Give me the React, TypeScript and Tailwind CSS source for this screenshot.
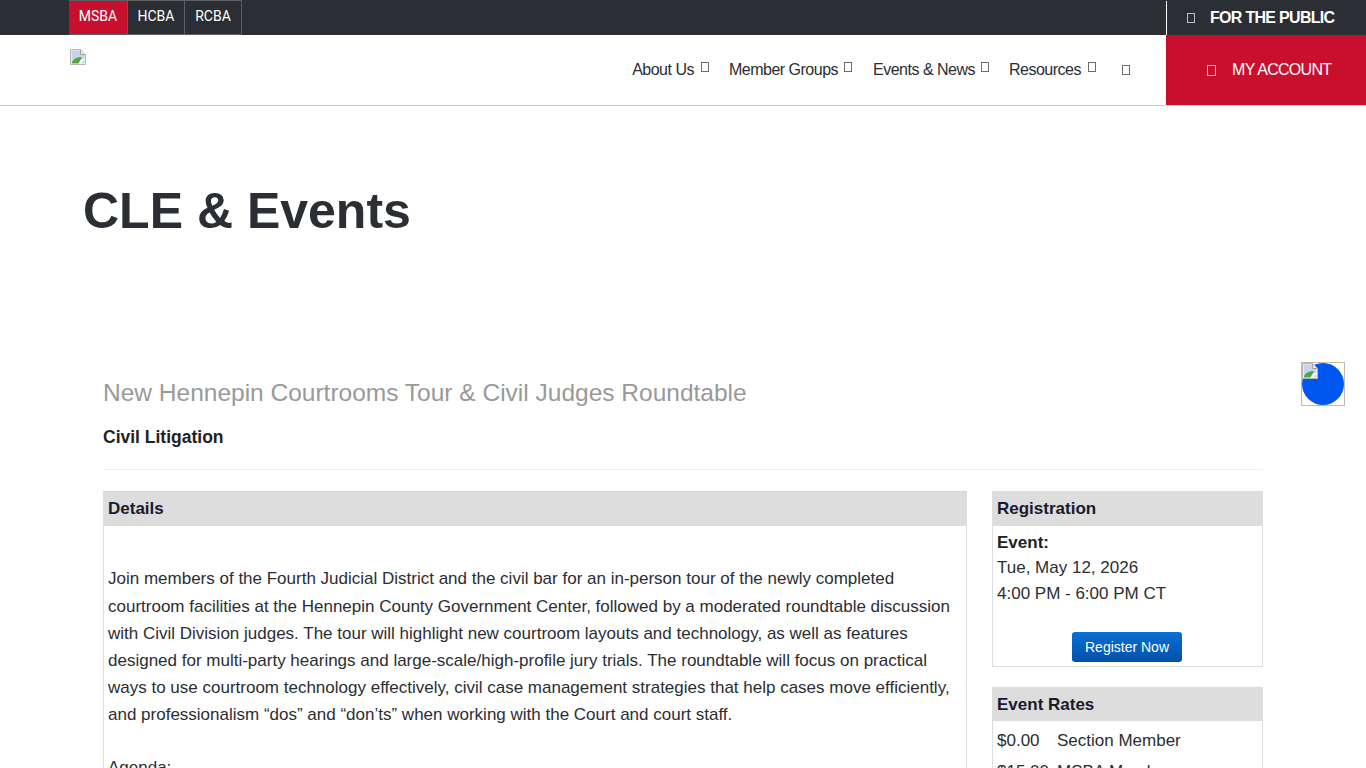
const BrokenImage = () => (
  <svg width="16" height="16" viewBox="0 0 16 16" className="block shrink-0">
    <path d="M0.5 0.5H10.5L15.5 5.5V15.5H0.5Z" fill="#fff" stroke="#b4b4b4" />
    <path d="M10.5 0.5V5.5H15.5" fill="#ececec" stroke="#a0a0a0" />
    <path d="M1.5 1.5H10V6H14.5V10L1.5 13Z" fill="#c4d3ee" />
    <path d="M1.5 14.5C3 9.5 8 7.5 12 8.5L8.5 14.5Z" fill="#4fa83d" />
    <path d="M9 14.5L12 9.5L14.5 11V14.5Z" fill="#fff" />
    <path d="M12.5 12.5L14.5 11V14.5H11.5Z" fill="#c4d3ee" />
  </svg>
);

const Glyph = ({ className = "" }: { className?: string }) => (
  <span className={`inline-block border border-current opacity-70 shrink-0 ${className}`} />
);

const NavItem = ({ label, className = "", glyphClass = "ml-[6px]" }: { label: string; className?: string; glyphClass?: string }) => (
  <div className={`flex items-start ${className}`}>
    <span>{label}</span>
    <Glyph className={`w-[8px] h-[10px] mt-[4.5px] ${glyphClass}`} />
  </div>
);

const Tab = ({ label, active }: { label: string; active?: boolean }) => (
  <div
    className={`h-[35px] pb-[2px] flex items-center justify-center border border-[#5c6064] border-l-0 text-[14px] text-white ${
      active ? "bg-[#c8102e] w-[59px] border-l" : "bg-[#2b2e32] w-[57px]"
    }`}
  >
    {label}
  </div>
);

export default function App() {
  return (
    <div className="h-screen overflow-hidden bg-white text-[#2b2e32] font-['Liberation_Sans',Arial,sans-serif]">
      <div className="h-[35px] bg-[#2b2e32] flex justify-between pl-[69px]">
        <div className="flex font-['Roboto',sans-serif]">
          <Tab label="MSBA" active />
          <Tab label="HCBA" />
          <Tab label="RCBA" />
        </div>
        <div className="w-[200px] mt-px border-l border-white flex items-center pl-[20px] text-white font-bold text-[16px] tracking-[-0.7px] pb-[1px]">
          <Glyph className="w-[8px] h-[10px]" />
          <span className="ml-[15px]">FOR THE PUBLIC</span>
        </div>
      </div>

      <div className="h-[71px] border-b border-[#cccccc] flex justify-between pl-[70px]">
        <div className="pt-[14px]">
          <BrokenImage />
        </div>
        <div className="flex">
          <div className="flex items-center text-[16px] tracking-[-0.5px] text-[#2b2e32] pb-[1px]">
            <NavItem label="About Us" className="mr-[20px]" glyphClass="ml-[7px]" />
            <NavItem label="Member Groups" className="mr-[21px]" />
            <NavItem label="Events & News" className="mr-[20px]" />
            <NavItem label="Resources" className="mr-[26px]" glyphClass="ml-[7px]" />
            <Glyph className="w-[8px] h-[10px] mr-[36px]" />
          </div>
          <div className="w-[200px] h-[70px] bg-[#c8102e] text-white flex items-center pl-[41px] text-[16px] tracking-[-0.7px]">
            <Glyph className="w-[9px] h-[11px]" />
            <span className="ml-[16px]">MY ACCOUNT</span>
          </div>
        </div>
      </div>

      <h1 className="pl-[83px] pt-[77px] text-[50px] leading-[56px] font-bold text-[#2b2e32]">CLE &amp; Events</h1>

      <div className="mx-[103px] mt-[139px]">
        <h2 className="text-[24.5px] leading-[30px] text-[#999999]">New Hennepin Courtrooms Tour &amp; Civil Judges Roundtable</h2>
        <div className="mt-[19px] text-[17.5px] leading-[20px] font-bold text-[#222222]">Civil Litigation</div>
        <div className="mt-[22px] border-t border-[#eeeeee]" />

        <div className="mt-[21px] flex gap-[25px] items-start">
          <div className="w-[864px] border border-[#dddddd] border-t-0 text-[#2b2e32]">
            <div className="h-[35px] -mx-px bg-[#dddddd] flex items-center pl-[5px] text-[17px] font-bold text-[#1a1a2e] border-t border-[#d6d6d6]">
              Details
            </div>
            <div className="px-[4px] pt-[39.4px] text-[17px] leading-[27.2px]">
              <p>
                Join members of the Fourth Judicial District and the civil bar for an in-person tour of the newly completed
                courtroom facilities at the Hennepin County Government Center, followed by a moderated roundtable discussion
                with Civil Division judges. The tour will highlight new courtroom layouts and technology, as well as features
                designed for multi-party hearings and large-scale/high-profile jury trials. The roundtable will focus on practical
                ways to use courtroom technology effectively, civil case management strategies that help cases move efficiently,
                and professionalism “dos” and “don’ts” when working with the Court and court staff.
              </p>
              <p className="mt-[25px]">Agenda:</p>
            </div>
          </div>

          <div className="w-[271px] shrink-0">
            <div className="h-[176px] border border-[#dddddd] border-t-0">
              <div className="h-[35px] -mx-px bg-[#dddddd] flex items-center pl-[5px] text-[17px] font-bold text-[#1a1a2e]">
                Registration
              </div>
              <div className="px-[4px] text-[17px] leading-[25.5px] pt-[3.7px]">
                <div className="font-bold text-[#222222]">Event:</div>
                <div>Tue, May 12, 2026</div>
                <div>4:00 PM - 6:00 PM CT</div>
              </div>
              <div className="flex justify-center mt-[26.3px] pr-[2px]">
                <div className="w-[110px] h-[30px] pl-[1px] rounded-[3px] bg-gradient-to-b from-[#0a6fd6] to-[#0450a8] text-white text-[14px] flex items-center justify-center">
                  Register Now
                </div>
              </div>
            </div>
            <div className="mt-[20px] border border-[#dddddd] border-t-0">
              <div className="h-[34px] pt-[1px] -mx-px bg-[#dddddd] flex items-center pl-[5px] text-[17px] font-bold text-[#1a1a2e]">
                Event Rates
              </div>
              <div className="px-[4px] pt-[7px] text-[17px] leading-[25px]">
                <div className="flex"><span className="w-[60px]">$0.00</span><span>Section Member</span></div>
                <div className="flex mt-[6px]"><span className="w-[60px]">$15.00</span><span>MSBA Member</span></div>
              </div>
            </div>
          </div>
        </div>
      </div>

      <div className="fixed left-[1301px] top-[362px] w-[44px] h-[44px] border border-[#c9b9a8]">
        <div className="absolute inset-0 rounded-full bg-[#0057f0]" />
        <div className="absolute left-0 top-0"><BrokenImage /></div>
      </div>
    </div>
  );
}
